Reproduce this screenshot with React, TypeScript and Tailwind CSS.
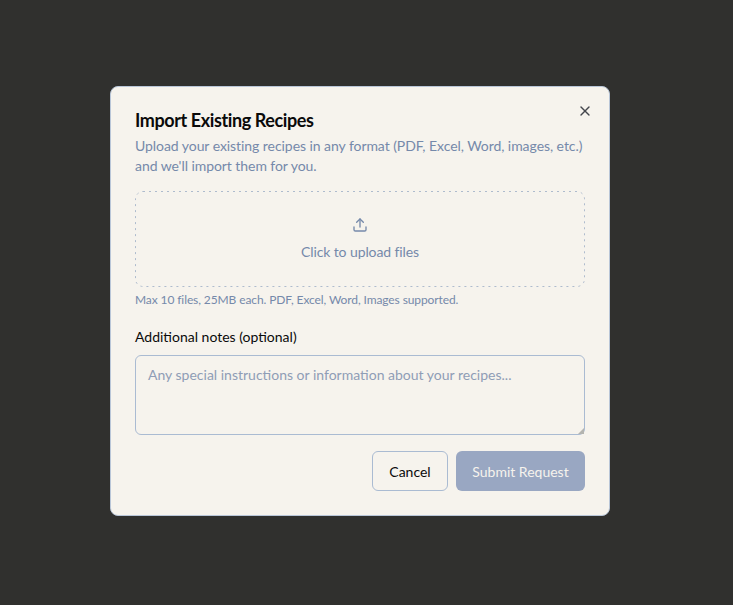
import { X, Upload } from "lucide-react";

export default function App() {
  return (
    <div className="w-full h-[605px] bg-[#30302e] flex items-center justify-center pr-[13px] pb-[3px] font-['Lato',sans-serif]">
      <div className="relative w-[500px] h-[430px] bg-[#f6f3ed] border border-[#b9c6d8] rounded-lg px-6 pt-[19px] flex flex-col">
        <button className="absolute right-[16px] top-[16px] text-[#44474d]">
          <X size={16} />
        </button>
        <h2 className="shrink-0 text-lg leading-7 font-bold text-[#0a0a0a] tracking-[-0.4px]">Import Existing Recipes</h2>
        <p className="shrink-0 text-sm leading-5 text-[#7589aa] mt-0.5 tracking-[-0.06px]">
          Upload your existing recipes in any format (PDF, Excel, Word, images, etc.) and we'll import them for you.
        </p>
        <div className="relative shrink-0 mt-[15px] h-[96px] rounded-lg flex flex-col items-center justify-center text-[#7589aa]">
          <svg className="absolute inset-0 w-full h-full" fill="none">
            <rect x="0.5" y="0.5" width="449" height="95" rx="7.5" stroke="#aebbcd" strokeDasharray="2 4" />
          </svg>
          <Upload size={16} className="mb-2" />
          <span className="text-sm tracking-[-0.1px] pt-px">Click to upload files</span>
        </div>
        <p className="shrink-0 text-xs leading-4 text-[#7589aa] mt-[5px] tracking-[-0.1px]">Max 10 files, 25MB each. PDF, Excel, Word, Images supported.</p>
        <label className="shrink-0 text-sm leading-5 text-[#0a0a0a] mt-[19px]">Additional notes (optional)</label>
        <div className="relative shrink-0 mt-2 h-20">
          <textarea
            className="block resize-none h-20 w-full border border-[#aabbd2] rounded-md px-3 pt-[9px] pb-2 text-sm bg-transparent placeholder:text-[#8f9db6]"
            placeholder="Any special instructions or information about your recipes..."
          />
          <svg className="absolute right-[1px] bottom-[1px] w-[6px] h-[6px]" viewBox="0 0 6 6" fill="#b4b4b0">
            <path d="M6 0 L6 6 L0 6 Z" />
          </svg>
        </div>
        <div className="shrink-0 mt-4 flex justify-end gap-2">
          <button className="h-10 w-[76px] pt-px border border-[#aabbd2] rounded-md text-sm text-[#0a0a0a]">Cancel</button>
          <button className="h-10 w-[129px] pt-px rounded-md text-sm text-[#f6f3ed] bg-[#99a7c2]">Submit Request</button>
        </div>
      </div>
    </div>
  );
}
